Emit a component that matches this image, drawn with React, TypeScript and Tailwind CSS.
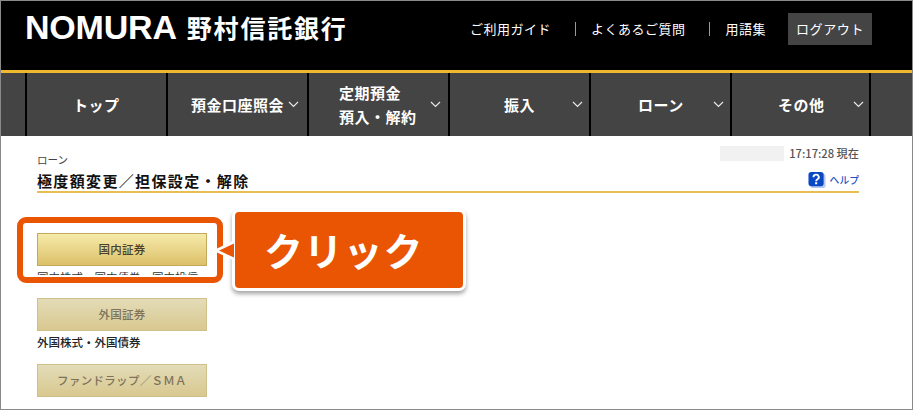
const jp = "font-['Noto_Sans_CJK_JP','Noto_Sans',sans-serif]";

function Chevron() {
  return (
    <svg width="11" height="7" viewBox="0 0 11 7" className="shrink-0">
      <polyline points="1,1 5.5,5.5 10,1" fill="none" stroke="#e8e8e8" strokeWidth="1.2" />
    </svg>
  );
}

function NavCell({ label, chevron = true, pl, chevronRight = 6, narrow = false }: { label: React.ReactNode; chevron?: boolean; pl: string; chevronRight?: number; narrow?: boolean }) {
  return (
    <div className={`relative h-full ${narrow ? "w-[139px]" : "w-[141px]"} shrink-0 border-r-[2px] border-black flex items-center`}>
      <div className={`${pl} text-[15px] font-bold leading-[24px] tracking-[0.5px] text-white whitespace-nowrap`}>{label}</div>
      {chevron && (
        <div className="absolute top-[28px]" style={{ right: chevronRight }}>
          <Chevron />
        </div>
      )}
    </div>
  );
}

function GoldButton({ label, dim = false }: { label: string; dim?: boolean }) {
  return (
    <div
      className={`w-[170px] h-[33px] flex items-center justify-center border text-[11.5px] font-medium tracking-[0.3px] ${
        dim
          ? "border-[#cfc08a] bg-gradient-to-b from-[#e3dcb8] to-[#d9c88f] text-[#7d725a]"
          : "border-[#c2a95c] bg-gradient-to-b from-[#f6eaa9] to-[#dcc069] text-[#4a3f28]"
      }`}
    >
      {label}
    </div>
  );
}

export default function App() {
  return (
    <div className={`relative w-[913px] h-[410px] box-border border border-[#8a8a8a] bg-white overflow-hidden ${jp}`}>
      {/* header */}
      <div className="h-[69px] bg-black flex items-start">
        <div className="ml-[24px] mt-[7px] flex items-center h-[38px]">
          <span className="font-['Liberation_Sans',sans-serif] text-[34px] font-bold text-white tracking-[-0.2px] leading-none">NOMURA</span>
          <span className="ml-[10px] text-[25px] font-bold text-white tracking-[1.8px] leading-none">野村信託銀行</span>
        </div>
        <div className="ml-auto mr-[40px] mt-[12px] flex items-center h-[32px] text-[13px] text-white tracking-[0.5px]">
          <span>ご利用ガイド</span>
          <span className="ml-[24px] h-[14px] w-px bg-[#999]" />
          <span className="ml-[15px]">よくあるご質問</span>
          <span className="ml-[24px] h-[14px] w-px bg-[#999]" />
          <span className="ml-[15px]">用語集</span>
          <span className="ml-[22px] w-[84px] h-[32px] bg-[#444] flex items-center justify-center tracking-[0.6px]">ログアウト</span>
        </div>
      </div>
      <div className="h-[3px] bg-[#eeb92f]" />
      {/* nav */}
      <div className="h-[63px] bg-[#444444] flex">
        <div className="w-[26px] h-full border-r-[2px] border-black shrink-0" />
        <NavCell label="トップ" chevron={false} pl="pl-[46px]" />
        <NavCell label="預金口座照会" pl="pl-[23px]" chevronRight={8} />
        <NavCell
          label={
            <>
              定期預金
              <br />
              預入・解約
            </>
          }
          pl="pl-[30px]"
          chevronRight={7}
        />
        <NavCell label="振入" pl="pl-[54px]" />
        <NavCell label="ローン" pl="pl-[47px]" />
        <NavCell label="その他" chevronRight={5} pl="pl-[46px]" narrow />
      </div>
      {/* content */}
      <div className="pl-[36px] pr-[53px]">
        <div className="relative h-[57px] border-b-[2px] border-[#e8bd52]">
          <div className="pt-[17px] text-[10.5px] leading-[14px] text-[#444]">ローン</div>
          <div className="mt-[3px] text-[15px] font-bold leading-[22px] text-[#111] tracking-[1.35px]">極度額変更／担保設定・解除</div>
          <div className="absolute right-0 top-[8px] flex items-center h-[18px]">
            <div className="w-[64px] h-[15px] bg-[#f1f1f1] mr-[5px]" />
            <span className="text-[11.2px] font-medium text-[#555]">17:17:28 現在</span>
          </div>
          <div className="absolute right-0 top-[35px] flex items-center h-[18px]">
            <svg width="18" height="18" viewBox="0 0 19 18" className="mr-[4px]">
              <rect x="2.5" y="2.5" width="16" height="15" rx="3" fill="#b9c8ee" />
              <rect x="0.5" y="0.5" width="16" height="15" rx="3" fill="#0b49c4" />
              <path d="M5.8 6a2.8 2.6 0 1 1 4.2 2.2c-1 .6-1.4 1-1.4 2.1" fill="none" stroke="#fff" strokeWidth="2" />
              <rect x="7.5" y="11.3" width="2.2" height="2.2" fill="#fff" />
            </svg>
            <span className="text-[9.8px] font-medium text-[#1d4fc0]">ヘルプ</span>
          </div>
        </div>
        <div className="pt-[40px]">
          <GoldButton label="国内証券" />
          <div className="h-[5px] mt-[4px] overflow-hidden text-[11.5px] leading-[14px] text-[#333]">国内株式・国内債券・国内投信</div>
          <div className="h-[23px]" />
          <GoldButton label="外国証券" dim />
          <div className="h-[33px] pt-[2px] text-[11.5px] font-medium leading-[18px] text-[#222]">外国株式・外国債券</div>
          <GoldButton label="ファンドラップ／ＳＭＡ" dim />
        </div>
      </div>
      {/* highlight frame */}
      <div className="absolute left-[16px] top-[216px] w-[206px] h-[66px] box-border border-[6px] border-[#ea5504] rounded-[9px]" />
      {/* callout */}
      <div className="absolute left-[231px] top-[208px] w-[234px] h-[82px] box-border border-[3px] border-white rounded-[7px] bg-[#ea5504] shadow-[0_3px_4px_rgba(0,0,0,0.35)] flex items-center pl-[29px] pb-[2px]">
        <span className="text-[39px] font-bold text-white tracking-[0.8px] leading-none">クリック</span>
      </div>
      <svg width="18" height="22" viewBox="0 0 18 22" className="absolute left-[216px] top-[239px]">
        <polygon points="0,10 17,2 17,19" fill="#ea5504" />
        <polyline points="0,10 17,2" fill="none" stroke="#fff" strokeWidth="2.5" />
        <polyline points="0,11 17,19" fill="none" stroke="#fff" strokeWidth="2.5" />
      </svg>
    </div>
  );
}
